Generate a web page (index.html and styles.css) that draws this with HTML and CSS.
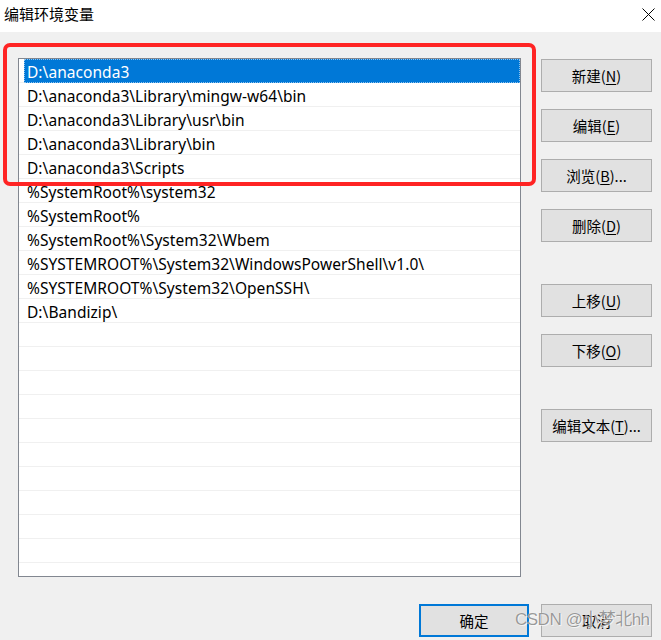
FILE: index.html
```html
<!DOCTYPE html>
<html lang="zh-CN">
<head>
<meta charset="utf-8">
<title>编辑环境变量</title>
<link rel="stylesheet" href="styles.css">
</head>
<body>
<div class="window">
  <div class="titlebar">
    <span class="title">编辑环境变量</span>
    <svg class="close" width="13" height="13" viewBox="0 0 13 13"><path d="M0.5 0.5 L12.5 12.5 M12.5 0.5 L0.5 12.5" stroke="#000" stroke-width="1" fill="none"/></svg>
  </div>
  <div class="content">
    <div class="main">
      <div class="list">
        <div class="row sel"><span class="hl">D:\anaconda3</span></div>
        <div class="row">D:\anaconda3\Library\mingw-w64\bin</div>
        <div class="row">D:\anaconda3\Library\usr\bin</div>
        <div class="row">D:\anaconda3\Library\bin</div>
        <div class="row">D:\anaconda3\Scripts</div>
        <div class="row">%SystemRoot%\system32</div>
        <div class="row">%SystemRoot%</div>
        <div class="row">%SystemRoot%\System32\Wbem</div>
        <div class="row">%SYSTEMROOT%\System32\WindowsPowerShell\v1.0\</div>
        <div class="row">%SYSTEMROOT%\System32\OpenSSH\</div>
        <div class="row">D:\Bandizip\</div>
        <div class="row"></div>
        <div class="row"></div>
        <div class="row"></div>
        <div class="row"></div>
        <div class="row"></div>
        <div class="row"></div>
        <div class="row"></div>
        <div class="row"></div>
        <div class="row"></div>
        <div class="row"></div>
        <div class="row"></div>
        <div class="row"></div>
      </div>
      <div class="side">
        <button class="btn">新建(<u>N</u>)</button>
        <button class="btn">编辑(<u>E</u>)</button>
        <button class="btn">浏览(<u>B</u>)...</button>
        <button class="btn">删除(<u>D</u>)</button>
        <button class="btn gap">上移(<u>U</u>)</button>
        <button class="btn">下移(<u>O</u>)</button>
        <button class="btn gap">编辑文本(<u>T</u>)...</button>
      </div>
    </div>
    <div class="footer">
      <button class="btn ok">确定</button>
      <button class="btn cancel">取消</button>
    </div>
  </div>
  <div class="annot"></div>
  <div class="wm">CSDN @小梦北hh</div>
</div>
</body>
</html>
```
FILE: styles.css
```css
html, body {
  margin: 0;
  padding: 0;
}
body {
  width: 661px;
  height: 640px;
  overflow: hidden;
  background: #f0f0f0;
  font-family: "Noto Sans CJK SC", sans-serif;
}
.window {
  position: relative;
  width: 661px;
  height: 640px;
  background: #f0f0f0;
}
.titlebar {
  height: 32px;
  background: #ffffff;
  display: flex;
  justify-content: space-between;
  align-items: flex-start;
  padding: 0 6px 0 4px;
  box-sizing: border-box;
}
.title {
  font-size: 15px;
  line-height: 20px;
  margin-top: 4px;
  color: #000;
}
.close {
  margin-top: 8px;
}
.content {
  padding: 26px 0 0 18px;
}
.main {
  display: flex;
  align-items: flex-start;
}
.list {
  width: 503px;
  height: 519px;
  box-sizing: border-box;
  border: 1px solid #828790;
  background: #ffffff;
  overflow: hidden;
}
.row {
  height: 24px;
  box-sizing: border-box;
  border-bottom: 1px solid #f0f0f0;
  padding: 3px 0 0 8px;
  font-family: "Noto Sans", sans-serif;
  font-size: 15.5px;
  letter-spacing: 0.05px;
  line-height: 20px;
  color: #000;
  white-space: nowrap;
}
.row.sel {
  padding: 0 0 0 5px;
  border-bottom: 1px solid #f0f0f0;
}
.hl {
  display: block;
  height: 24px;
  box-sizing: border-box;
  padding: 3px 0 0 3px;
  background: #0078d7;
  color: #ffffff;
  outline: 1px dotted #8fc3ee;
  outline-offset: -1px;
}
.side {
  display: flex;
  flex-direction: column;
  margin-left: 20px;
  padding-top: 1px;
  gap: 17px;
}
.btn {
  width: 111px;
  height: 33px;
  box-sizing: border-box;
  border: 1px solid #adadad;
  background: #e1e1e1;
  font-family: "Noto Sans CJK SC", sans-serif;
  font-size: 14.5px;
  color: #000;
  padding: 0;
  margin: 0;
  line-height: 20px;
}
.btn u {
  text-decoration-thickness: 1px;
  text-underline-offset: 2px;
}
.btn.gap {
  margin-top: 25px;
}
.footer {
  display: flex;
  gap: 12px;
  margin-top: 27px;
  padding-left: 401px;
}
.btn.ok {
  width: 110px;
  border: 2px solid #0078d7;
}
.annot {
  position: absolute;
  left: 3px;
  top: 43px;
  width: 533px;
  height: 143px;
  box-sizing: border-box;
  border: 4px solid #ff2424;
  border-radius: 7px;
  pointer-events: none;
}
.wm {
  position: absolute;
  left: 515px;
  top: 609px;
  font-family: "Liberation Sans", "Noto Sans CJK SC", sans-serif;
  font-size: 17px;
  line-height: 22px;
  color: rgba(120, 120, 120, 0.75);
  text-shadow: 0 0 1px #fff, 1px 1px 0 rgba(255,255,255,0.6);
  white-space: nowrap;
  letter-spacing: -0.5px;
}
```
